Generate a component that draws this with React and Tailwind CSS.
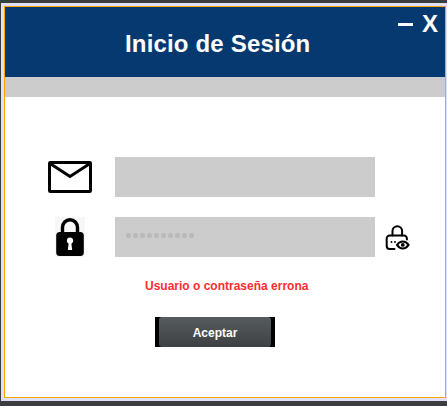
function MailIcon() {
  return (
    <svg className="h-8 w-11" viewBox="0 0 44 32" fill="none" stroke="#000" strokeWidth="3">
      <rect x="1.5" y="1.5" width="41" height="29" rx="0.8" />
      <path d="M2 2.5 22 15.5 42 2.5" />
    </svg>
  );
}

function LockIcon() {
  return (
    <svg className="h-10 w-[30px] bg-[#f7f7f7]" viewBox="0 0 30 40">
      <path d="M7.500 17v-6.500a7.500 7.800 0 0 1 15 0V17" fill="none" stroke="#000" strokeWidth="3.4" />
      <rect x="1.200" y="15" width="27.600" height="24" rx="3.500" />
      <path d="M15 20.600a3.200 3.200 0 0 0-1.400 6.100L12.800 33h4.400l-.8-6.300A3.200 3.200 0 0 0 15 20.600Z" fill="#fff" />
    </svg>
  );
}

function RevealIcon() {
  return (
    <svg className="h-[26px] w-[25px]" viewBox="0 0 25 26" fill="none" stroke="#000" strokeWidth="2" strokeLinecap="round">
      <path d="M7.500 10.500V6a4.800 4.800 0 0 1 9.600 0v4.500" />
      <path d="M9.500 24H4.700a3 3 0 0 1-3-3v-7.500a3 3 0 0 1 3-3h14.200a3 3 0 0 1 3 3v1" />
      <path d="M12 19.900c3-4.700 8.600-4.700 11.600 0-3 4.700-8.600 4.700-11.600 0Z" />
      <circle cx="17.800" cy="19.900" r="1.900" fill="#000" stroke="none" />
      <path d="M6.500 17h.01M10 17h.01" strokeWidth="1.900" />
    </svg>
  );
}

export default function App() {
  return (
    <div className="h-[406px] w-[447px] bg-[#3c3d40] pt-[3px] pl-px font-['Liberation_Sans',Arial,sans-serif] font-bold">
      <div className="h-[398px] bg-[#dfdff7] pt-[3px] pl-[3px]">
        <main className="h-[392px] w-[442px] border border-[#ffa500] bg-white">
          <header className="flex h-[70px] bg-[#063970] text-white">
            <h1 className="w-[390px] pt-[23px] pl-[120px] text-2xl leading-7 tracking-[0.17px] whitespace-nowrap">Inicio de Sesión</h1>
            <div className="flex pt-[3px] text-2xl leading-7">
              <button aria-label="Minimizar" className="mt-[13px] ml-[3px] h-[3px] w-[15px] bg-white" />
              <button className="ml-[9px] h-7 w-4">X</button>
            </div>
          </header>
          <div className="h-5 bg-[#cccccc]" />
          <form className="flex flex-col pt-[60px]" onSubmit={(e) => e.preventDefault()}>
            <div className="flex h-10 items-center">
              <div className="flex w-[110px] pl-[43px]"><MailIcon /></div>
              <input aria-label="Correo" className="h-10 w-[260px] bg-[#cccccc] px-[10px] outline-none" />
            </div>
            <div className="mt-5 flex h-10 items-center">
              <div className="flex w-[110px] pl-[50px]"><LockIcon /></div>
              <div className="flex h-10 w-[260px] gap-[2px] bg-[#cccccc] pt-[16px] pl-[11px]">
                {Array.from({ length: 10 }, (_, i) => (
                  <span key={i} className="size-[5px] rounded-[2px] bg-[#bababa]" />
                ))}
              </div>
              <button aria-label="Mostrar" className="ml-[10px] pt-[2px]"><RevealIcon /></button>
            </div>
            <p className="mt-[21px] h-4 pl-[140px] text-xs leading-4 whitespace-nowrap text-[#ff2d2d]">Usuario o contraseña errona</p>
            <button className="mt-[23px] ml-[150px] h-[30px] w-[120px] bg-black px-1 text-xs text-white">
              <span className="flex h-[30px] w-[112px] items-center justify-center rounded-[3px] bg-linear-to-b from-[#565b5d] to-[#3d4143] pt-px">Aceptar</span>
            </button>
          </form>
        </main>
      </div>
    </div>
  );
}
